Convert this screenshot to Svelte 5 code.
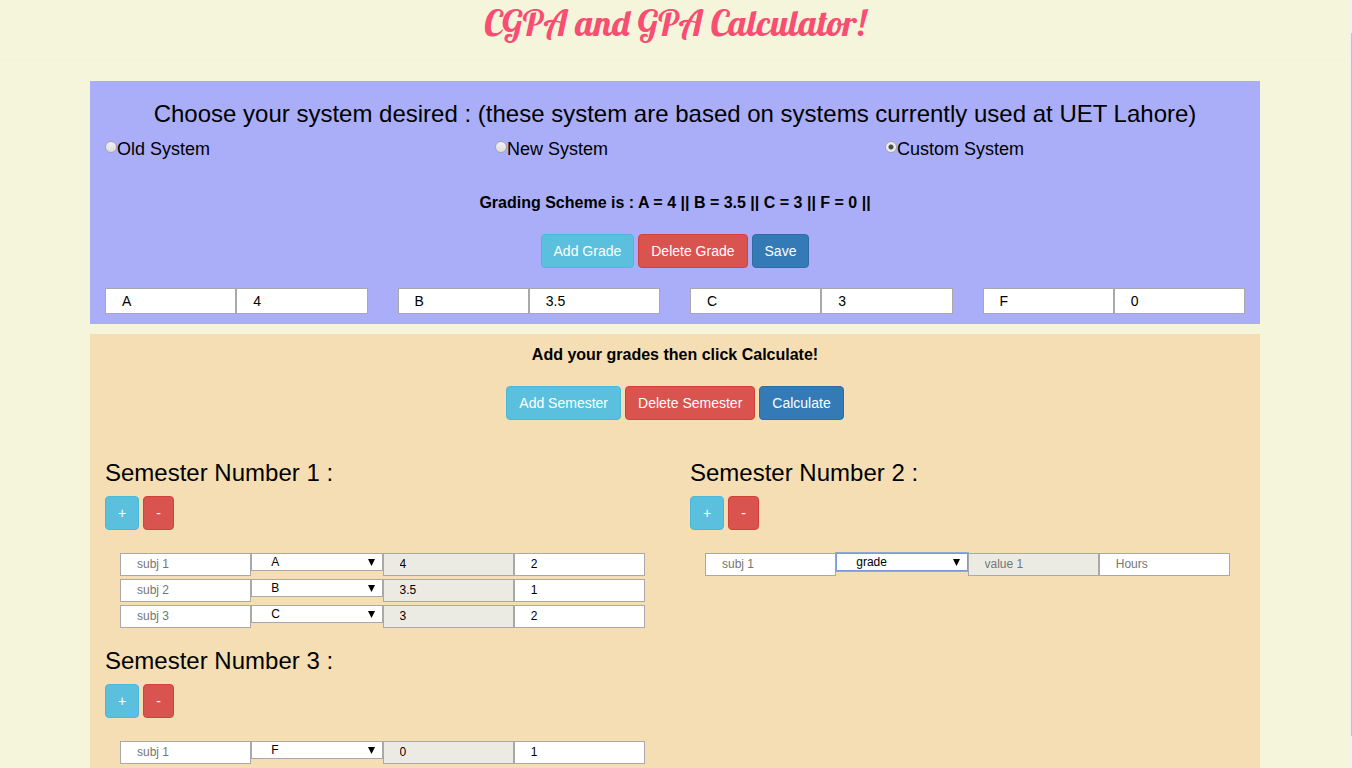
<script>
  let system = $state('custom');
  let grades = $state([
    { name: 'A', value: '4' },
    { name: 'B', value: '3.5' },
    { name: 'C', value: '3' },
    { name: 'F', value: '0' }
  ]);
  let semesters = $state([
    [
      { grade: 'A', hours: '2' },
      { grade: 'B', hours: '1' },
      { grade: 'C', hours: '2' }
    ],
    [{ grade: '', hours: '' }],
    [{ grade: 'F', hours: '1' }]
  ]);

  const systems = [
    { id: 'old', label: 'Old System' },
    { id: 'new', label: 'New System' },
    { id: 'custom', label: 'Custom System' }
  ];

  let scheme = $derived(grades.map((g) => `${g.name} = ${g.value} ||`).join(' '));
  const valueOf = (name) => grades.find((g) => g.name === name)?.value ?? '';
</script>

<div class="page">
  <header>
    <h1>CGPA and GPA Calculator!</h1>
  </header>

  <main>
    <section class="panel system">
      <h2>Choose your system desired : (these system are based on systems currently used at UET Lahore)</h2>
      <div class="choices">
        {#each systems as s}
          <label><input type="radio" name="system" value={s.id} bind:group={system} />{s.label}</label>
        {/each}
      </div>
      <p class="note">Grading Scheme is : {scheme}</p>
      <div class="buttons">
        <button class="info" onclick={() => grades.push({ name: '', value: '' })}>Add Grade</button>
        <button class="danger" onclick={() => grades.pop()}>Delete Grade</button>
        <button class="primary">Save</button>
      </div>
      <div class="grades">
        {#each grades as g}
          <div class="pair">
            <input type="text" aria-label="Grade" bind:value={g.name} />
            <input type="text" aria-label="Points" bind:value={g.value} />
          </div>
        {/each}
      </div>
    </section>

    <section class="panel results">
      <p class="note">Add your grades then click Calculate!</p>
      <div class="buttons">
        <button class="info" onclick={() => semesters.push([{ grade: '', hours: '' }])}>Add Semester</button>
        <button class="danger" onclick={() => semesters.pop()}>Delete Semester</button>
        <button class="primary">Calculate</button>
      </div>
      <div class="semesters">
        {#each semesters as subjects, i}
          <article>
            <h2>Semester Number {i + 1} :</h2>
            <div class="buttons start">
              <button class="info" aria-label="Add subject" onclick={() => subjects.push({ grade: '', hours: '' })}>+</button>
              <button class="danger" aria-label="Delete subject" onclick={() => subjects.pop()}>-</button>
            </div>
            <div class="subjects">
              {#each subjects as row, j}
                <div class="subject">
                  <input type="text" aria-label="Subject" placeholder="subj {j + 1}" />
                  <select aria-label="Grade" class:active={row.grade === ''} bind:value={row.grade}>
                    <option value="">grade</option>
                    {#each grades as g}<option value={g.name}>{g.name}</option>{/each}
                  </select>
                  <input type="text" aria-label="Value" class="value" readonly placeholder="value {j + 1}" value={valueOf(row.grade)} />
                  <input type="text" aria-label="Hours" placeholder="Hours" bind:value={row.hours} />
                </div>
              {/each}
            </div>
          </article>
        {/each}
      </div>
    </section>
  </main>
  <div class="rail"><span></span></div>
</div>

<style>
  :global(body) {
    margin: 0;
    background: #f5f5dc;
  }
  :global(*) {
    box-sizing: border-box;
  }
  .page {
    position: relative;
    height: 100vh;
    overflow: hidden;
    padding-right: 2px;
    color: #000;
    background: #f5f5dc;
    font: 14px/20px 'Liberation Sans', Arial, sans-serif;
  }
  header {
    margin-bottom: 20px;
    padding-bottom: 14px;
    border-bottom: 1px solid #f2f0e2;
  }
  h1 {
    margin: 0;
    color: #f94d72;
    font: normal 36px/46px Lobster, 'Liberation Serif', cursive;
    text-align: center;
  }
  main {
    display: flex;
    flex-direction: column;
    gap: 10px;
    max-width: 1170px;
    margin: 0 auto;
  }
  .panel {
    padding: 20px 15px 10px;
    background: #aaaef9;
  }
  .results {
    padding-top: 9px;
    background: #f5deb3;
  }
  h2 {
    margin: 0 0 10px;
    font-size: 24px;
    font-weight: normal;
    line-height: 26px;
  }
  .system h2 {
    margin-bottom: 9px;
    text-align: center;
  }
  .choices {
    display: grid;
    grid-template-columns: repeat(3, 1fr);
    margin: 0 -15px 29px;
    font-size: 18px;
    line-height: 26px;
  }
  .choices label {
    display: flex;
    align-items: center;
    padding: 0 15px;
  }
  input[type='radio'] {
    appearance: none;
    flex: none;
    width: 12px;
    height: 12px;
    margin: 0 0 4px;
    border: 1px solid #a3a3b4;
    border-radius: 50%;
    background: linear-gradient(#f2f2f2, #dcdcdc);
  }
  input[type='radio']:checked {
    background: radial-gradient(circle, #4d4d4d 0 2px, #ececec 3px);
  }
  .note {
    margin: 0 0 19px;
    font-size: 16px;
    font-weight: bold;
    line-height: 24px;
    text-align: center;
  }
  .buttons {
    display: flex;
    justify-content: center;
    gap: 4px;
  }
  .start {
    justify-content: flex-start;
  }
  button {
    height: 34px;
    padding: 0 12px;
    border: 1px solid;
    border-radius: 4px;
    color: #fff;
    font: inherit;
  }
  .info {
    background: #5bc0de;
    border-color: #46b8da;
  }
  .danger {
    background: #d9534f;
    border-color: #d43f3a;
  }
  .primary {
    background: #337ab7;
    border-color: #2e6da4;
  }
  .grades {
    display: grid;
    grid-template-columns: repeat(4, 1fr);
    gap: 30px;
    margin-top: 20px;
  }
  .pair {
    display: grid;
    grid-template-columns: 1fr 1fr;
  }
  input[type='text'],
  select {
    width: 100%;
    min-width: 0;
    margin: 0;
    border: 1px solid #a9a9a9;
    border-radius: 0;
    background-color: #fff;
    color: #000;
    font: inherit;
    outline: none;
  }
  input[type='text'] {
    height: 23px;
    padding: 0 16px 2px;
  }
  .pair input[type='text'] {
    height: 26px;
    padding-bottom: 0;
  }
  input::placeholder {
    color: #757575;
    opacity: 1;
  }
  input.value {
    background-color: #ebebe4;
  }
  .semesters {
    display: grid;
    grid-template-columns: 1fr 1fr;
    align-items: start;
    gap: 20px 30px;
    margin-top: 40px;
  }
  .subjects {
    display: grid;
    gap: 3px;
    margin-top: 23px;
    padding: 0 15px;
    font-size: 12px;
  }
  .subject {
    display: grid;
    grid-template-columns: repeat(4, 1fr);
    align-items: start;
  }
  select {
    appearance: none;
    height: 18px;
    padding: 0 19px;
    background: #fff url("data:image/svg+xml,%3Csvg xmlns='http://www.w3.org/2000/svg' width='7' height='7'%3E%3Cpath d='M0 0h7L3.500 7z'/%3E%3C/svg%3E") no-repeat right 7px center;
    line-height: 16px;
  }
  select.active {
    border-color: #7b9bd8;
    box-shadow: 0 0 0 1px #8fa9d6;
  }
  .rail {
    position: absolute;
    top: 0;
    right: 0;
    bottom: 0;
    width: 5px;
    padding: 33px 0 32px;
    background: #f3f1e9;
  }
  .rail span {
    display: block;
    height: 100%;
    border-right: 1px solid #c1c1c1;
  }
</style>
